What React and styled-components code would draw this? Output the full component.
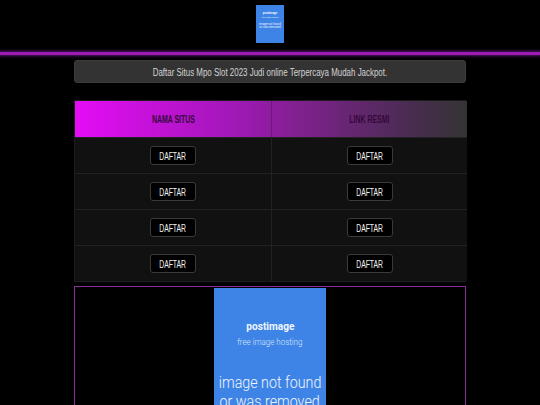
import styled, { createGlobalStyle } from 'styled-components';

const GlobalStyle = createGlobalStyle`
  html, body {
    margin: 0;
    padding: 0;
    background: #000;
    overflow: hidden;
  }
  body {
    font-family: "Liberation Sans", Arial, sans-serif;
  }
`;

const Page = styled.div`
  width: 540px;
  height: 405px;
  background: #000;
  display: flex;
  flex-direction: column;
  align-items: center;
  overflow: hidden;

  & > * { flex-shrink: 0; }
`;

// condensed look: the reference uses a narrow face we don't have
const Narrow = styled.span`
  display: inline-block;
  white-space: nowrap;
  transform: scaleX(${p => p.$sx || 0.7});
`;

const Top = styled.header`
  width: 100%;
  display: flex;
  justify-content: center;
  padding-top: 5px;
  height: 46px;
  box-sizing: border-box;
`;

const Logo = styled.div`
  width: 28px;
  height: 38px;
  background: #3d84e6;
  display: flex;
  flex-direction: column;
  align-items: center;
  padding-top: 7px;
  box-sizing: border-box;
  font-family: Roboto, "Liberation Sans", sans-serif;
  color: #e8f0ff;
  line-height: 1;

  & > b { font-size: 3px; }
  & > small { font-size: 2px; margin-top: 1px; }
  & > span { font-size: 3px; margin-top: 5px; text-align: center; }
`;

const GlowLine = styled.div`
  width: 100%;
  height: 3px;
  background: #9c1cb4;
  box-shadow: 0 0 3px 1px #5e1272;
  margin-top: 6px;
`;

const Main = styled.main`
  width: 392px;
  display: flex;
  flex-direction: column;
  margin-top: 5px;
`;

const Notice = styled.div`
  height: 21px;
  background: #333;
  border: 1px solid #3c3c3c;
  border-radius: 3px;
  display: flex;
  align-items: center;
  justify-content: center;
  color: #d4d4d4;
  font-size: 11.5px;
`;

const Table = styled.div`
  margin-top: 17px;
  display: grid;
  grid-template-columns: 196px 196px;
  border: 1px solid #1c1c1c;
`;

const HeadRow = styled.div`
  grid-column: 1 / 3;
  display: grid;
  grid-template-columns: 196px 196px;
  height: 36px;
  background: linear-gradient(90deg, #e40cf6 0%, #a218b8 40%, #7a2288 60%, #4a2c52 85%, #343434 100%);
`;

const HeadCell = styled.div`
  display: flex;
  align-items: center;
  justify-content: center;
  font-weight: bold;
  font-size: 10.5px;
  color: #34083c;
  border-left: ${p => (p.$first ? 'none' : '1px solid #6a1a78')};
`;

const Cell = styled.div`
  height: 35px;
  background: #111;
  border-top: 1px solid #222;
  border-left: ${p => (p.$first ? 'none' : '1px solid #222')};
  display: flex;
  align-items: center;
  justify-content: center;
`;

const Button = styled.a`
  width: 46px;
  height: 19px;
  box-sizing: border-box;
  background: #000;
  border: 1px solid #3a3a3a;
  border-radius: 3px;
  color: #f2f2f2;
  font-size: 11px;
  display: flex;
  align-items: center;
  justify-content: center;
  text-decoration: none;
`;

const ImageBox = styled.div`
  margin-top: 4px;
  border: 1px solid #8c2aa0;
  border-bottom: none;
  height: 130px;
  display: flex;
  justify-content: center;
  padding-top: 1px;
  box-sizing: border-box;
  overflow: hidden;
`;

const Placeholder = styled.div`
  width: 112px;
  height: 160px;
  background: #3d84e6;
  color: #f0f5ff;
  font-family: Roboto, "Liberation Sans", sans-serif;
  display: flex;
  flex-direction: column;
  align-items: center;
  padding-top: 33px;
  box-sizing: border-box;
  line-height: 1;
`;

const Brand = styled.div`
  font-size: 11.5px;
  font-weight: bold;
`;

const Tagline = styled.div`
  font-size: 9.5px;
  margin-top: 4px;
  color: #dce8ff;
  font-weight: 300;
`;

const Missing = styled.div`
  font-size: 17px;
  font-weight: 300;
  margin-top: 27px;
  text-align: center;
  line-height: 19px;
`;

const rows = [0, 1, 2, 3];

export default function App() {
  return (
    <Page>
      <GlobalStyle />
      <Top>
        <Logo>
          <b>postimage</b>
          <small>free image hosting</small>
          <span>image not found<br />or was removed</span>
        </Logo>
      </Top>
      <GlowLine />
      <Main>
        <Notice>
          <Narrow $sx={0.69}>Daftar Situs Mpo Slot 2023 Judi online Terpercaya Mudah Jackpot.</Narrow>
        </Notice>
        <Table>
          <HeadRow>
            <HeadCell $first><Narrow $sx={0.66}>NAMA SITUS</Narrow></HeadCell>
            <HeadCell><Narrow $sx={0.66}>LINK RESMI</Narrow></HeadCell>
          </HeadRow>
          {rows.map(i => [
            <Cell key={`a${i}`} $first><Button href="#"><Narrow $sx={0.62}>DAFTAR</Narrow></Button></Cell>,
            <Cell key={`b${i}`}><Button href="#"><Narrow $sx={0.62}>DAFTAR</Narrow></Button></Cell>,
          ])}
        </Table>
        <ImageBox>
          <Placeholder>
            <Brand><Narrow $sx={0.88}>postimage</Narrow></Brand>
            <Tagline><Narrow $sx={0.84}>free image hosting</Narrow></Tagline>
            <Missing>
              <Narrow $sx={0.84}>image not found</Narrow>
              <br />
              <Narrow $sx={0.84}>or was removed</Narrow>
            </Missing>
          </Placeholder>
        </ImageBox>
      </Main>
    </Page>
  );
}
